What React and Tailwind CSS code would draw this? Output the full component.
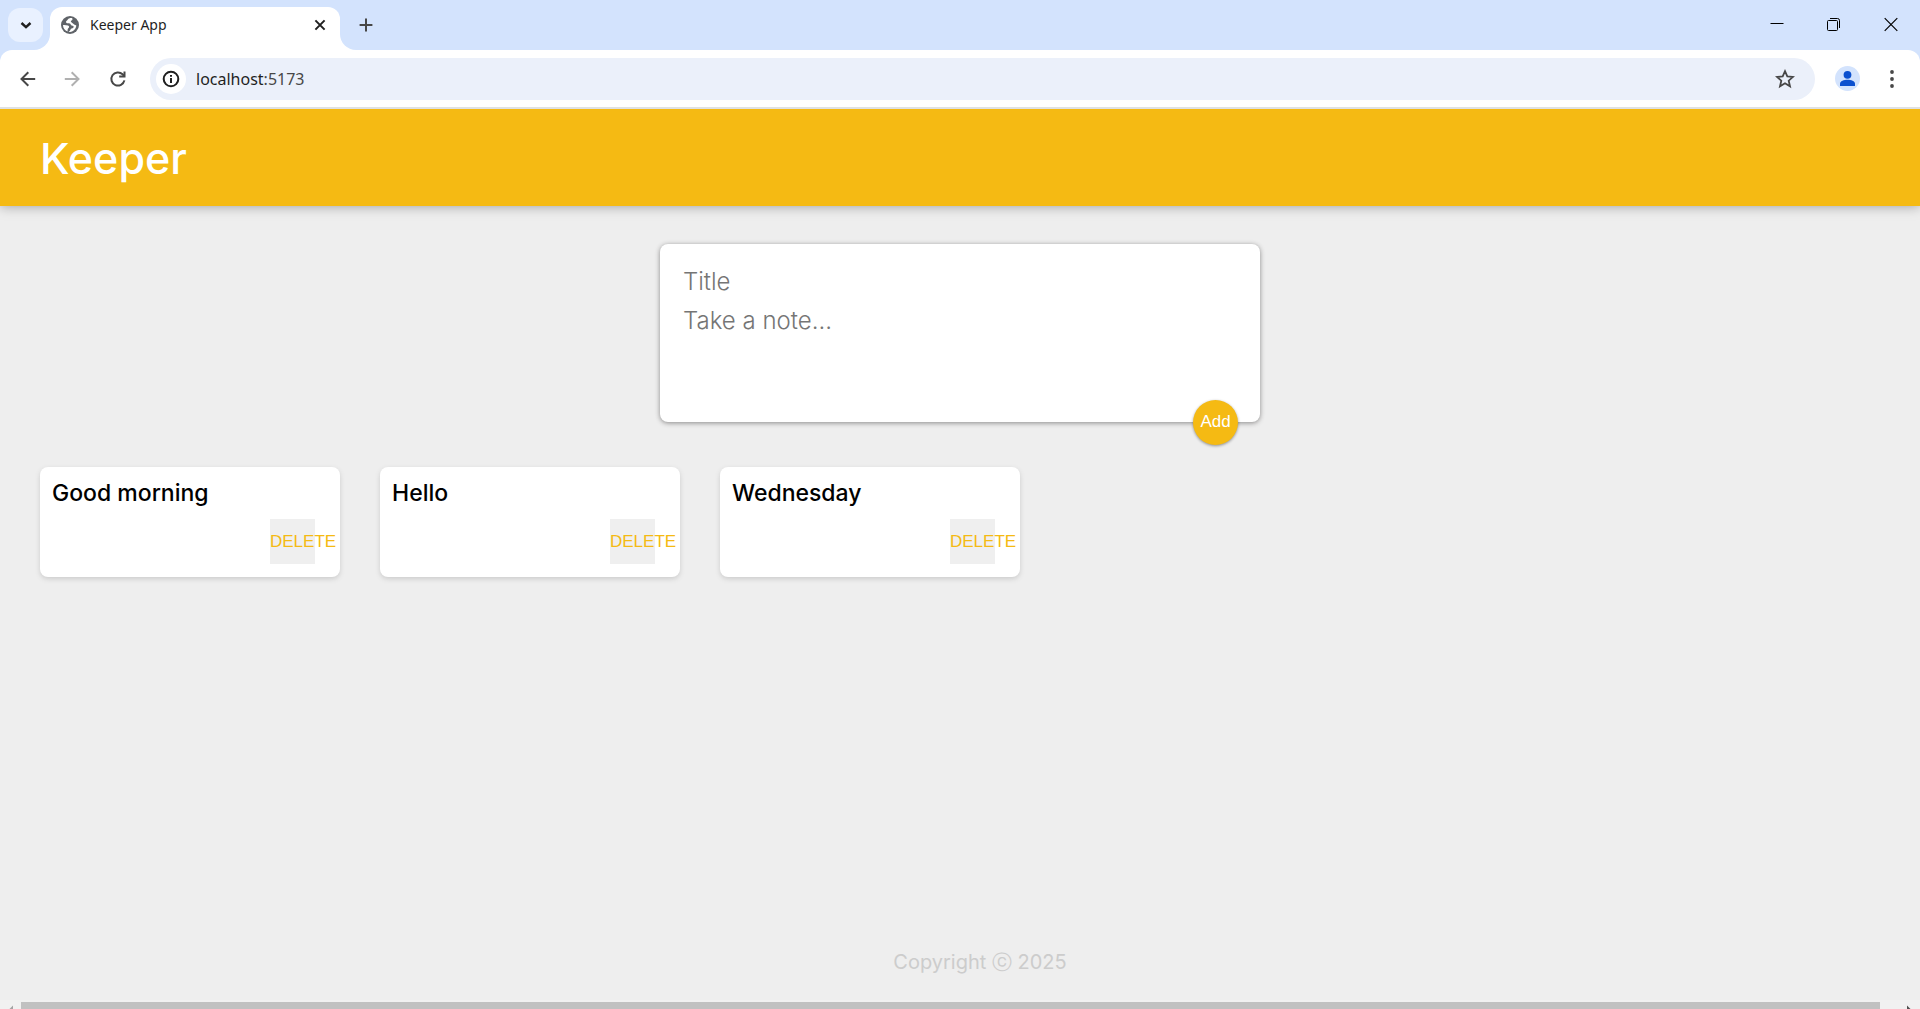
import React from "react";

const notes = ["Good morning", "Hello", "Wednesday"];

function Globe() {
  return (
    <svg viewBox="0 0 18 18" className="h-[18px] w-[18px] shrink-0" aria-hidden="true">
      <circle cx="9" cy="9" r="9" fill="#5f6368" />
      <path
        d="M11 2.1C9.3 1.8 7.5 2.4 6.8 3.4C6.2 4.4 5 4.8 5 6C5.1 7.2 6.4 7.4 7.6 7.2C9 7 9.6 7.8 9.8 8.8C10 9.8 11.4 9.5 12.3 10C13.2 10.8 12.4 12 11.4 12.2C10.2 12.4 9.6 13 9.3 14C9 15 8 15.4 7.2 15.6C9.5 16.4 12 15.6 13.6 13.6C14.8 12 15.4 10.4 15.2 9.2C14.2 9.4 13.4 8.6 12.6 8C11.8 7.2 10.8 6.9 10.1 6.1C9.5 5.3 10.2 4.5 11 4.2C11.7 3.9 11.6 2.8 11 2.1Z"
        fill="#fff"
      />
      <path d="M2 9C3.5 8.8 5.5 9 7 9.6C8.2 10.1 8.4 11 7.8 11.8C7 12.6 6.6 13 6.6 14.2V15.6C3.8 14.6 2 12 2 9Z" fill="#fff" />
    </svg>
  );
}

function Icon({ className, children }) {
  return (
    <svg viewBox="0 0 20 20" className={className} fill="none" stroke="currentColor" strokeWidth="2" aria-hidden="true">
      {children}
    </svg>
  );
}

function TabStrip() {
  return (
    <div className="flex h-[50px] items-end bg-[#d3e3fd] pl-2">
      <button
        aria-label="Search tabs"
        className="relative z-10 mb-2 flex h-[34px] w-[35px] items-center justify-center rounded-xl bg-[#e9f1ff] text-[#1f1f1f]"
      >
        <Icon className="h-5 w-5">
          <path d="M5.5 8L10 12.2L14.5 8" strokeWidth="2.4" />
        </Icon>
      </button>
      <div className="relative ml-[7px] flex h-[43px] w-[290px] items-center rounded-t-xl bg-white pb-[7px] pl-[11px] pr-[10px]">
        <span className="absolute -left-4 bottom-0 h-4 w-4 bg-white">
          <span className="block h-full w-full rounded-br-2xl bg-[#d3e3fd]" />
        </span>
        <span className="absolute -right-4 bottom-0 h-4 w-4 bg-white">
          <span className="block h-full w-full rounded-bl-2xl bg-[#d3e3fd]" />
        </span>
        <Globe />
        <span className="ml-[11px] flex-1 font-['Noto_Sans',sans-serif] text-sm leading-5 text-[#1f1f1f]">Keeper App</span>
        <button aria-label="Close tab" className="text-[#1f1f1f]">
          <Icon className="h-5 w-5">
            <path d="M5.4 5.4L14.6 14.6M14.6 5.4L5.4 14.6" />
          </Icon>
        </button>
      </div>
      <button aria-label="New tab" className="mb-[15px] ml-4 text-[#474747]">
        <Icon className="h-5 w-5">
          <path d="M10 3.6V16.4M3.6 10H16.4" />
        </Icon>
      </button>
      <div className="ml-auto flex h-full items-center gap-[37px] pr-[19px] text-black">
        <button aria-label="Minimize">
          <Icon className="h-5 w-5">
            <path d="M3.5 8.5H16.5" strokeWidth="1" />
          </Icon>
        </button>
        <button aria-label="Restore">
          <Icon className="h-5 w-5">
            <rect x="3.5" y="5.5" width="10" height="10" rx="1" strokeWidth="1" />
            <path d="M6 3.5H13.5Q15.5 3.5 15.5 5.5V13" strokeWidth="1" />
          </Icon>
        </button>
        <button aria-label="Close">
          <Icon className="h-5 w-5">
            <path d="M3.7 3.2L16.3 15.8M16.3 3.2L3.7 15.8" strokeWidth="1.2" />
          </Icon>
        </button>
      </div>
    </div>
  );
}

function Toolbar() {
  return (
    <div className="relative z-10 bg-[#d3e3fd]">
      <div className="flex h-[59px] items-center rounded-t-xl border-b-2 border-[#dfe1e3] bg-white px-[18px] text-[#474747]">
        <button aria-label="Back">
          <Icon className="h-5 w-5">
            <path d="M17.2 10H4M10.3 3.2L3.5 10L10.3 16.8" />
          </Icon>
        </button>
        <button aria-label="Forward" className="ml-6 text-[#b0b0b0]">
          <Icon className="h-5 w-5">
            <path d="M2.8 10H16M9.7 3.2L16.5 10L9.7 16.8" />
          </Icon>
        </button>
        <button aria-label="Reload" className="ml-[26px]">
          <Icon className="h-5 w-5">
            <path d="M16.4 11.4A6.6 6.6 0 1 1 14.6 5.3L16.2 7" />
            <path d="M16.5 2.4V7.6H11.2" />
          </Icon>
        </button>
        <div className="ml-[22px] flex h-[42px] flex-1 items-center rounded-full bg-[#ebf0fa] pl-[6px] pr-5">
          <button
            aria-label="View site information"
            className="flex h-[30px] w-[30px] items-center justify-center rounded-full bg-white text-[#1f1f1f]"
          >
            <Icon className="h-5 w-5">
              <circle cx="10" cy="10" r="7.3" />
              <path d="M10 9V14M10 5.9V7.7" />
            </Icon>
          </button>
          <a href="#" className="ml-[10px] flex-1 font-['Noto_Sans',sans-serif] text-base leading-6 text-[#1f1f1f]">
            localhost<span className="text-[#474747]">:5173</span>
          </a>
          <button aria-label="Bookmark this tab">
            <Icon className="h-5 w-5">
              <path
                d="M10 2.2L12.3 7.4L18 7.9L13.7 11.7L15 17.3L10 14.3L5 17.3L6.3 11.7L2 7.9L7.7 7.4Z"
                strokeWidth="1.8"
              />
            </Icon>
          </button>
        </div>
        <button aria-label="Profile" className="ml-5 rounded-full bg-[#d3e3fd] text-[#0b50cf]">
          <svg viewBox="0 0 25 25" className="h-[25px] w-[25px]" fill="currentColor" aria-hidden="true">
            <circle cx="12.5" cy="8.8" r="3.9" />
            <path d="M5 20V17.8C5 15 9 13.8 12.5 13.8S20 15 20 17.8V20Z" />
          </svg>
        </button>
        <button aria-label="Menu" className="ml-[22px]">
          <svg viewBox="0 0 20 20" className="h-5 w-5" fill="currentColor" aria-hidden="true">
            <circle cx="10" cy="3" r="1.9" />
            <circle cx="10" cy="10" r="1.9" />
            <circle cx="10" cy="17" r="1.9" />
          </svg>
        </button>
      </div>
    </div>
  );
}

function CreateArea() {
  return (
    <form
      onSubmit={(e) => e.preventDefault()}
      className="relative mx-auto w-full max-w-[600px] rounded-lg bg-white px-5 pt-[17px] pb-[17px] font-[Inter,sans-serif] text-2xl shadow-[0_1px_5px_rgb(138,137,137)]"
    >
      <input
        aria-label="Title"
        placeholder="Title"
        className="block h-10 w-full px-[3px] font-light outline-none placeholder:text-[#757575]"
      />
      <textarea
        aria-label="Note"
        placeholder="Take a note..."
        rows={3}
        className="mt-1 block h-[100px] w-full resize-none px-[3px] font-light outline-none placeholder:text-[#757575]"
      />
      <button className="absolute right-[22px] -bottom-[23px] h-[45px] w-[45px] rounded-full bg-[#f5ba13] font-['Liberation_Sans',Arial,sans-serif] text-[17px] text-white shadow-[0_1px_3px_rgba(0,0,0,0.4)]">
        Add
      </button>
    </form>
  );
}

function Note({ title }) {
  return (
    <article className="h-[110px] w-[300px] rounded-lg bg-white px-3 py-3 shadow-[0_2px_5px_#ccc]">
      <h2 className="font-[Inter,sans-serif] text-[23px] leading-7 font-medium text-black">{title}</h2>
      <button className="mt-3 mr-[13px] ml-auto block h-[45px] w-[45px] bg-[#efefef] text-left font-['Liberation_Sans',Arial,sans-serif] text-[17px] whitespace-nowrap text-[#f5ba13]">
        DELETE
      </button>
    </article>
  );
}

export default function App() {
  return (
    <div className="flex min-h-screen flex-col bg-[#eee]">
      <TabStrip />
      <Toolbar />
      <header className="flex h-[97px] items-center bg-[#f5ba13] px-10 shadow-[0_0_12px_rgba(0,0,0,0.35)]">
        <h1 className="pt-0.5 font-[Inter,sans-serif] text-[43px] leading-none font-medium text-white">Keeper</h1>
      </header>
      <main className="flex-1 pt-[38px]">
        <CreateArea />
        <section className="mt-[45px] flex flex-wrap gap-10 px-10">
          {notes.map((n) => (
            <Note key={n} title={n} />
          ))}
        </section>
      </main>
      <footer className="pb-[25px] pl-10 text-center font-[Inter,sans-serif] text-xl leading-[26px] text-[#ccc]">
        Copyright ⓒ 2025
      </footer>
      <div className="flex h-[9px] items-end overflow-hidden bg-[#f1f1f1]">
        <svg viewBox="0 0 21 9" className="h-[9px] w-[21px]" aria-hidden="true">
          <path d="M13 5.5V9H9.5Z" fill="#a3a3a3" />
        </svg>
        <div className="h-[7px] flex-1 bg-[#c1c1c1]" />
        <svg viewBox="0 0 40 9" className="h-[9px] w-10" aria-hidden="true">
          <path d="M27 5.5V9H30.5Z" fill="#505050" />
        </svg>
      </div>
    </div>
  );
}
